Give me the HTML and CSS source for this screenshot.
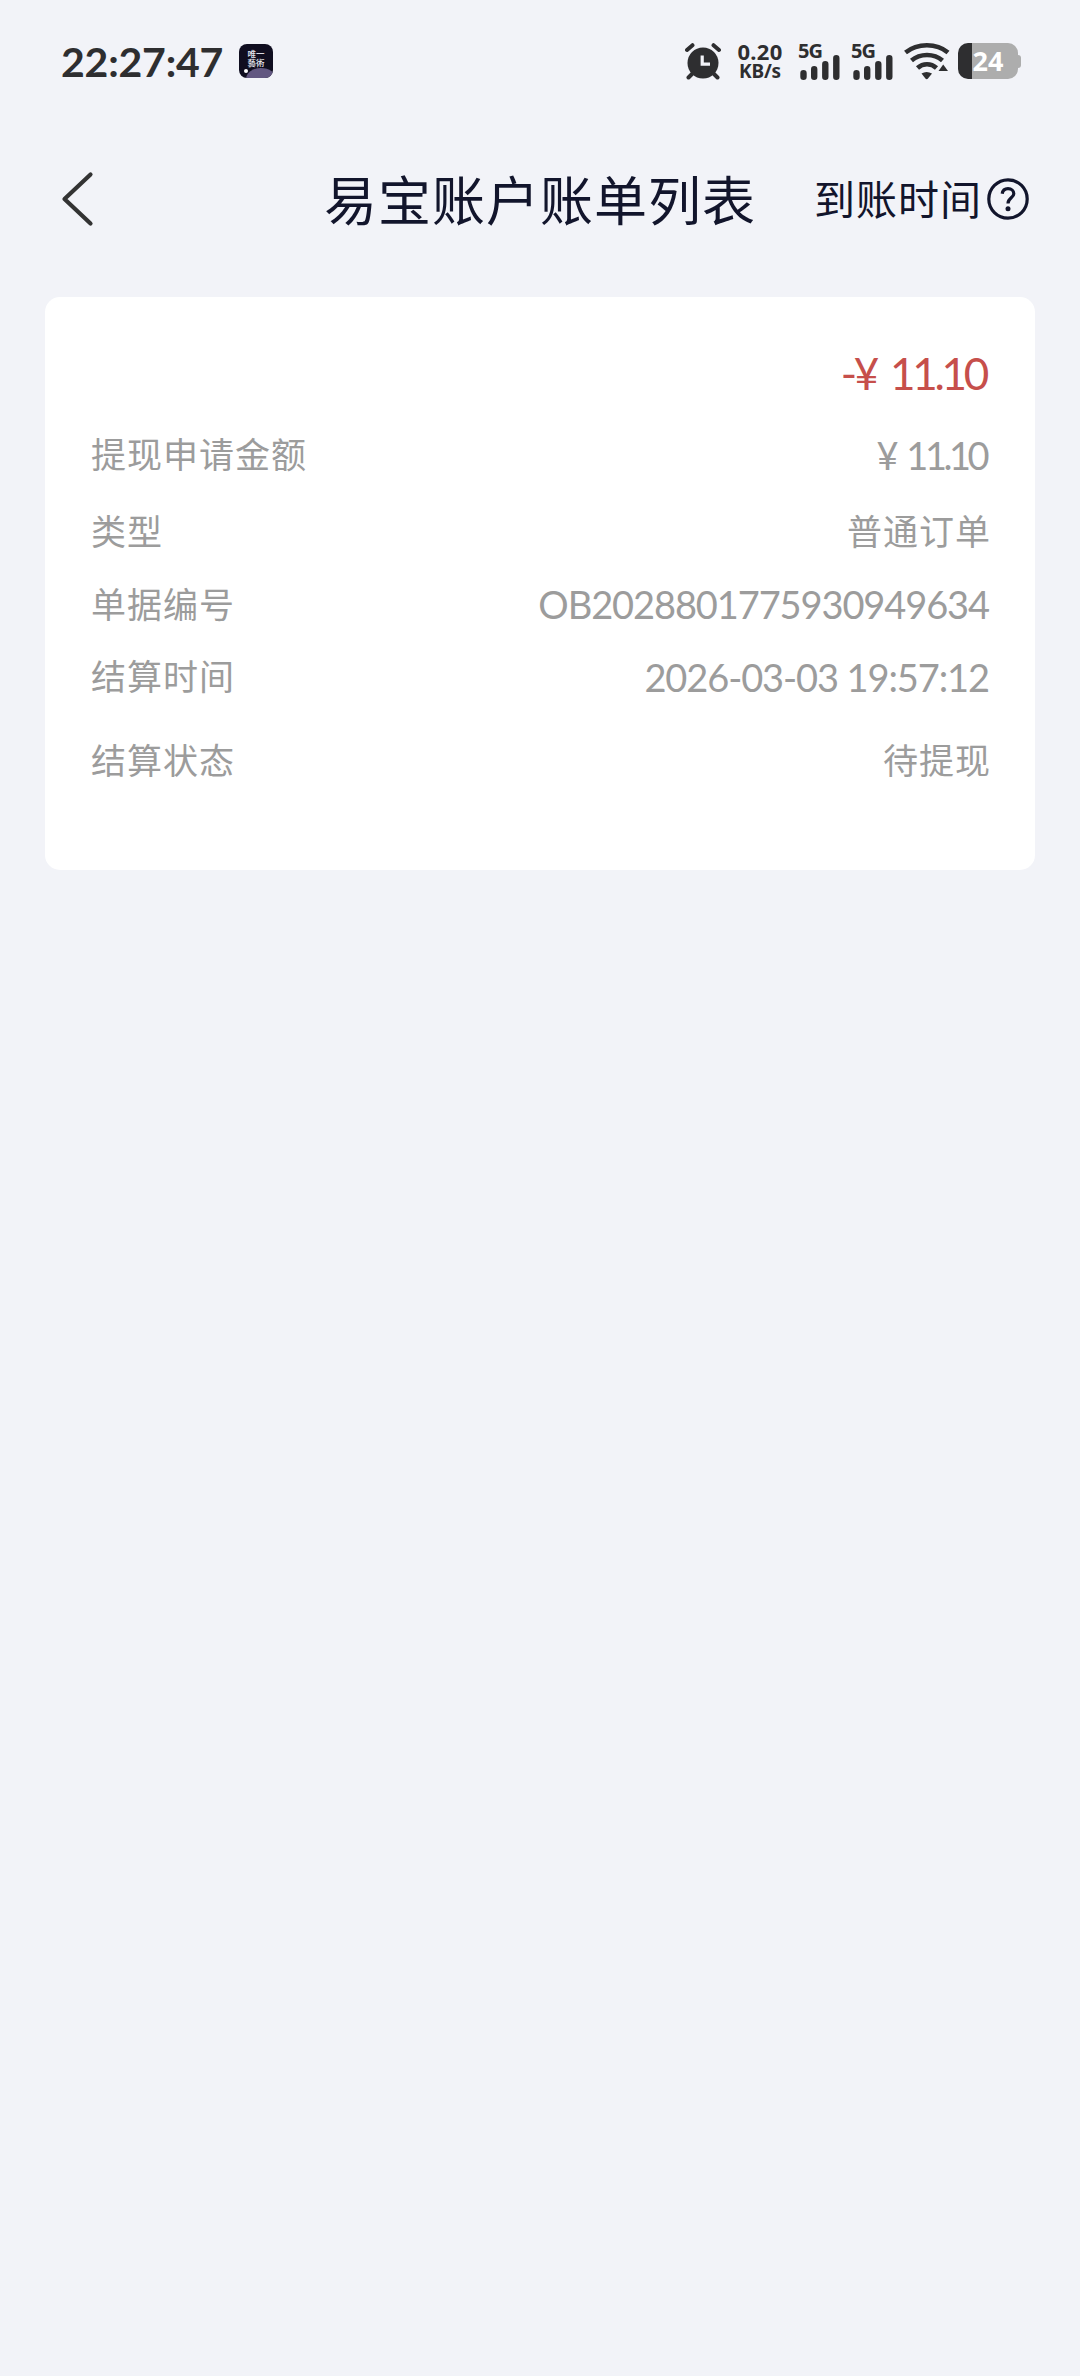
FILE: index.html
```html
<!DOCTYPE html>
<html lang="zh-CN">
<head>
<meta charset="utf-8">
<title>易宝账户账单列表</title>
<link rel="stylesheet" href="styles.css">
</head>
<body>
<div class="status-bar">
  <span class="clock">22:27:47</span>
  <div class="app-badge"><span>唯一</span><span>藝術</span><i class="planet"></i><i class="dot"></i></div>
  <svg class="alarm" width="36" height="37" viewBox="0 0 36 37">
    <circle cx="18" cy="20" r="15.5" fill="#2e2e30"/>
    <path d="M2 7 7.5 2.200M28.500 2.200 34 7M8 30 3.500 34.500M28 30 32.500 34.500" stroke="#2e2e30" stroke-width="4" stroke-linecap="round"/>
    <path d="M17.200 12.500V21.200H25" fill="none" stroke="#f2f3f8" stroke-width="3.200"/>
  </svg>
  <div class="speed"><span class="rate">0.20</span><span class="unit">KB/s</span></div>
  <div class="signal">
    <span>5G</span>
    <svg width="41" height="25" viewBox="0 0 41 25" stroke="#2e2e30" stroke-width="6.400" stroke-linecap="round"><path d="M3.500 18.200V21.800M14.200 14.200V21.800M25.300 9.200V21.800M36.300 3.200V21.800"/></svg>
  </div>
  <div class="signal">
    <span>5G</span>
    <svg width="41" height="25" viewBox="0 0 41 25" stroke="#2e2e30" stroke-width="6.400" stroke-linecap="round"><path d="M3.500 18.200V21.800M14.200 14.200V21.800M25.300 9.200V21.800M36.300 3.200V21.800"/></svg>
  </div>
  <svg class="wifi" width="46" height="38" viewBox="0 0 46 38">
    <g fill="none" stroke="#2e2e30" stroke-width="4.600">
      <path d="M1.500 10.500C13.500 .800 32.500 .800 44 10.500"/>
      <path d="M7.500 18.500C16 11.200 30 11.200 38.500 18.500"/>
      <path d="M13.500 26C19 21 27 21 32.500 26"/>
    </g>
    <path d="M17.500 31.500Q22.500 28.500 28 31.500L24 36.500Q22.700 38 21.400 36.500Z" fill="#2e2e30"/>
    <path d="M39.200 22.500 44 29H34.500Z" fill="#2e2e30"/>
  </svg>
  <div class="battery"><div class="cell">24</div><div class="nub"></div></div>
</div>

<header class="nav">
  <svg class="back" width="36" height="56" viewBox="0 0 36 56"><path d="M30.500 3.500 4.500 28 30.500 52.500" fill="none" stroke="#333" stroke-width="4.200" stroke-linecap="round" stroke-linejoin="round"/></svg>
  <h1>易宝账户账单列表</h1>
  <div class="arrival">
    <span>到账时间</span>
    <svg width="42" height="42" viewBox="0 0 42 42" fill="none" stroke="#12152c">
      <circle cx="21" cy="21" r="19.200" stroke-width="3.200"/>
      <path d="M15.200 15.800C15.800 12.200 18 10.700 21 10.700C24.500 10.700 26.800 12.900 26.800 15.700C26.800 19.800 21 20 21 25.500" stroke-width="3.200"/>
      <circle cx="21" cy="30.700" r="2.500" fill="#12152c" stroke="none"/>
    </svg>
  </div>
</header>

<main class="card">
  <div class="amount">-¥ 11.10</div>
  <div class="row"><span class="label">提现申请金额</span><span class="num money">¥ 11.10</span></div>
  <div class="row short"><span class="label">类型</span><span class="value">普通订单</span></div>
  <div class="row short"><span class="label">单据编号</span><span class="num">OB2028801775930949634</span></div>
  <div class="row short"><span class="label">结算时间</span><span class="num">2026-03-03 19:57:12</span></div>
  <div class="row tall"><span class="label">结算状态</span><span class="value">待提现</span></div>
</main>
</body>
</html>
```
FILE: styles.css
```css
* { box-sizing: border-box; }
body {
  margin: 0;
  min-height: 2376px;
  background: #f2f3f8;
  font-family: Lato, "Noto Sans CJK SC", sans-serif;
}
svg { display: block; flex: none; }

.status-bar {
  display: flex;
  align-items: center;
  height: 122px;
  padding-left: 61px;
  color: #2e2e30;
  font-family: "Noto Sans", sans-serif;
  font-weight: 700;
}
.clock { width: 178px; font-family: Lato, sans-serif; font-size: 41px; letter-spacing: -0.2px; white-space: nowrap; }
.app-badge {
  position: relative;
  width: 34px;
  height: 34px;
  padding-top: 5px;
  border-radius: 8px;
  overflow: hidden;
  background: #100e20;
  color: #e8e8f0;
  font: 500 8.5px/9px "Noto Sans CJK TC", sans-serif;
  text-align: center;
}
.app-badge span { display: block; }
.planet { position: absolute; left: 7px; top: 24px; width: 30px; height: 22px; border-radius: 50%; background: #625781; }
.dot { position: absolute; left: 5px; top: 25px; width: 4px; height: 4px; border-radius: 50%; background: #fff; }
.alarm { margin-left: 412px; }
.speed { width: 46px; margin-left: 16px; text-align: center; line-height: 20px; }
.speed span { display: block; height: 20px; white-space: nowrap; }
.rate { font-size: 22px; letter-spacing: 0.3px; }
.unit { font-size: 19px; letter-spacing: -0.2px; }
.signal { width: 42px; margin-left: 17px; }
.signal + .signal { margin-left: 11px; }
.signal span { display: block; height: 13px; margin-left: -2px; font-size: 20px; line-height: 18px; letter-spacing: -1px; }
.wifi { margin-left: 9px; }
.battery { display: flex; align-items: center; margin-left: 8px; }
.cell {
  width: 60px;
  height: 36px;
  border-radius: 10px;
  background: linear-gradient(90deg, #2e2e30 14px, #adadad 14px);
  color: #fff;
  font-size: 27px;
  line-height: 36px;
  text-align: center;
}
.nub { width: 3px; height: 13px; border-radius: 0 3px 3px 0; background: #adadad; }

.nav {
  display: grid;
  grid-template-columns: 260px 1fr 260px;
  align-items: center;
  height: 154px;
  margin-bottom: 21px;
  color: #12152c;
}
.nav h1 { margin: 0; padding-bottom: 3px; font-size: 53px; font-weight: 400; letter-spacing: 1px; text-align: center; white-space: nowrap; }
.back { margin-left: 60px; }
.arrival { display: flex; align-items: center; justify-content: flex-end; gap: 5px; padding-right: 51px; font-size: 41px; letter-spacing: 1px; white-space: nowrap; }
.arrival span { padding-bottom: 4px; }

.card {
  width: 990px;
  height: 573px;
  margin: 0 auto;
  padding: 35px 46px 0 46px;
  border-radius: 15px;
  background: #fff;
  color: #9c9c9c;
}
.amount { height: 82px; margin-right: 3px; color: #c64f4b; font-size: 44px; line-height: 82px; letter-spacing: -3.300px; word-spacing: 6px; text-align: right; }
.row { display: flex; align-items: center; justify-content: space-between; height: 82px; font-size: 35px; letter-spacing: 1px; white-space: nowrap; }
.row.short { height: 72.500px; }
.row.tall { height: 94px; }
.label, .value { padding-bottom: 5px; }
.num { padding-bottom: 1px; font-size: 38px; letter-spacing: -1.100px; }
.num.money { margin-right: 3px; letter-spacing: -3.500px; word-spacing: 5px; }
.value { margin-right: -2px; }
```
